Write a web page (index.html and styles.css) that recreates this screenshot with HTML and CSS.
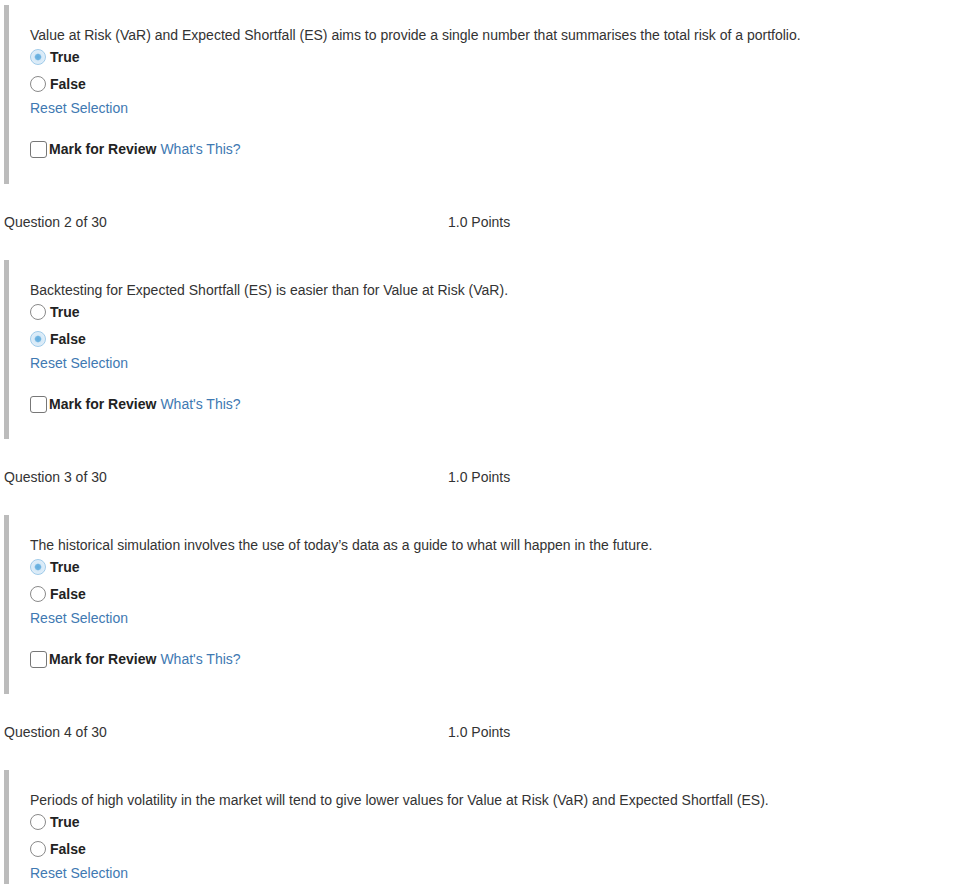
FILE: index.html
```html
<!DOCTYPE html>
<html>
<head>
<meta charset="utf-8">
<link rel="stylesheet" href="styles.css">
</head>
<body>
<div class="page">
  <section class="question">
    <p class="prompt">Value at Risk (VaR) and Expected Shortfall (ES) aims to provide a single number that summarises the total risk of a portfolio.</p>
    <div class="option"><span class="radio checked"></span><span class="label">True</span></div>
    <div class="option"><span class="radio"></span><span class="label">False</span></div>
    <a class="link reset">Reset Selection</a>
    <div class="review"><span class="checkbox"></span><span class="label">Mark for Review</span><a class="link whats">What's This?</a></div>
  </section>

  <div class="qhead"><span>Question 2 of 30</span><span>1.0 Points</span></div>
  <section class="question">
    <p class="prompt">Backtesting for Expected Shortfall (ES) is easier than for Value at Risk (VaR).</p>
    <div class="option"><span class="radio"></span><span class="label">True</span></div>
    <div class="option"><span class="radio checked"></span><span class="label">False</span></div>
    <a class="link reset">Reset Selection</a>
    <div class="review"><span class="checkbox"></span><span class="label">Mark for Review</span><a class="link whats">What's This?</a></div>
  </section>

  <div class="qhead"><span>Question 3 of 30</span><span>1.0 Points</span></div>
  <section class="question">
    <p class="prompt">The historical simulation involves the use of today’s data as a guide to what will happen in the future.</p>
    <div class="option"><span class="radio checked"></span><span class="label">True</span></div>
    <div class="option"><span class="radio"></span><span class="label">False</span></div>
    <a class="link reset">Reset Selection</a>
    <div class="review"><span class="checkbox"></span><span class="label">Mark for Review</span><a class="link whats">What's This?</a></div>
  </section>

  <div class="qhead"><span>Question 4 of 30</span><span>1.0 Points</span></div>
  <section class="question">
    <p class="prompt">Periods of high volatility in the market will tend to give lower values for Value at Risk (VaR) and Expected Shortfall (ES).</p>
    <div class="option"><span class="radio"></span><span class="label">True</span></div>
    <div class="option"><span class="radio"></span><span class="label">False</span></div>
    <a class="link reset">Reset Selection</a>
    <div class="review"><span class="checkbox"></span><span class="label">Mark for Review</span><a class="link whats">What's This?</a></div>
  </section>
</div>
</body>
</html>
```

FILE: styles.css
```css
html, body {
  margin: 0;
  padding: 0;
  background: #fff;
  overflow: hidden;
}

body {
  font-family: "Liberation Sans", Arial, sans-serif;
  font-size: 14px;
  color: #333;
}

.page {
  padding-top: 5px;
}

.question {
  margin-left: 4px;
  border-left: 5px solid #bcbcbc;
  padding: 20px 0 23px 21px;
  height: 179px;
  box-sizing: border-box;
}

.prompt {
  margin: 0;
  line-height: 20px;
}

.option {
  display: flex;
  align-items: center;
  height: 24px;
  margin-top: 3px;
}

.prompt + .option {
  margin-top: 0;
}

.radio {
  width: 16px;
  height: 16px;
  border-radius: 50%;
  border: 1px solid #8a8a8a;
  box-sizing: border-box;
  background: #fff;
  margin-right: 4px;
  flex: none;
}

.radio.checked {
  border-color: #9fcbea;
  background: radial-gradient(circle, #62acdd 0, #70b5e2 2.6px, #d6e9f7 3.8px, #e8f2fa 100%);
}

.label {
  font-weight: bold;
  color: #222;
}

.link {
  color: #4079b2;
  text-decoration: none;
}

.reset {
  display: block;
  line-height: 20px;
  margin-top: 2px;
}

.review {
  display: flex;
  align-items: center;
  height: 24px;
  margin-top: 19px;
}

.whats {
  margin-left: 4px;
}

.checkbox {
  width: 17px;
  height: 17px;
  border: 1px solid #777;
  border-radius: 3px;
  box-sizing: border-box;
  background: #fff;
  margin-right: 2px;
  flex: none;
}

.qhead {
  display: grid;
  grid-template-columns: 444px auto;
  justify-content: start;
  padding-left: 4px;
  line-height: 20px;
  margin: 28px 0;
  color: #333;
}
```
